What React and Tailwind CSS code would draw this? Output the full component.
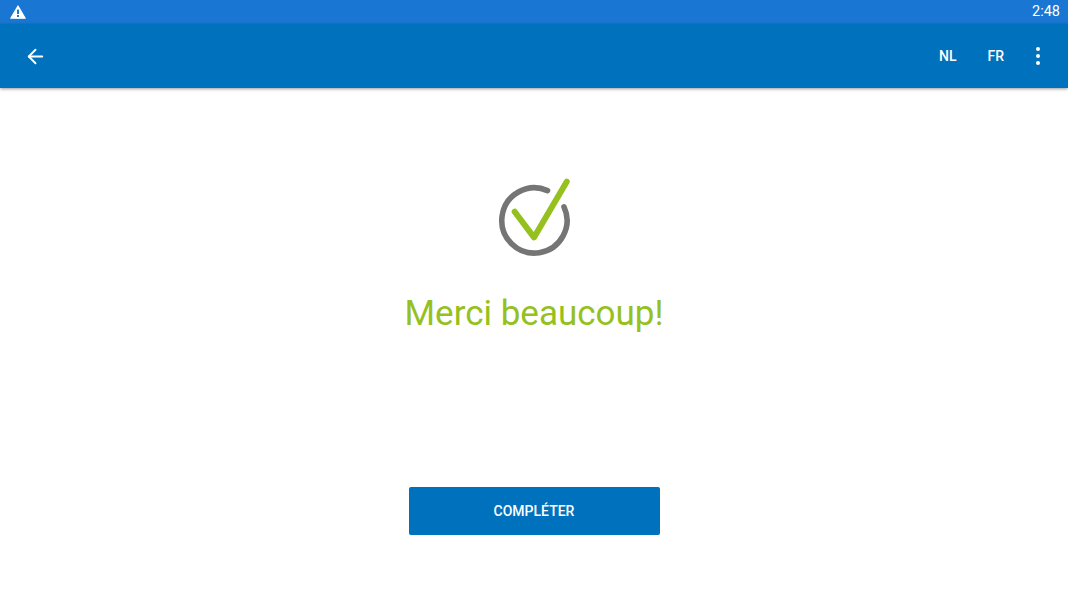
import { ArrowLeft } from 'lucide-react'

function WarningIcon() {
  return (
    <svg width="16" height="14" viewBox="0 0 16 14">
      <path d="M8 1 L15.2 13.2 H0.8 Z" fill="#fff" stroke="#fff" strokeWidth="1.2" strokeLinejoin="round" />
      <rect x="7" y="4.6" width="2" height="4.4" fill="#1976d2" />
      <rect x="7" y="10" width="2" height="2" fill="#1976d2" />
    </svg>
  )
}

function CheckCircle() {
  return (
    <svg width="76" height="80" viewBox="0 0 76 80" fill="none" strokeLinecap="round" strokeLinejoin="round">
      <path d="M51.5 12.6 A32.6 32.6 0 1 0 68 28.8" stroke="#757575" strokeWidth="5.6" />
      <path d="M18.7 33.7 L38 59.4 L70.7 3.7" stroke="#95c11f" strokeWidth="6" />
    </svg>
  )
}

export default function App() {
  return (
    <div className="h-[601px] flex flex-col bg-white font-['Roboto',sans-serif]">
      <div className="h-6 bg-[#1976d2] flex items-center justify-between pl-[10px] pr-2 text-white">
        <WarningIcon />
        <span className="text-[14.5px]">2:48</span>
      </div>
      <div className="h-16 bg-[#0071bc] flex items-center justify-between pl-6 pr-7 text-white shadow-[0_1px_3px_rgba(0,0,0,0.4)] z-10">
        <ArrowLeft size={23} strokeWidth={2} />
        <div className="flex items-center text-sm font-medium">
          <span className="mr-[31px]">NL</span>
          <span className="mr-[32px]">FR</span>
          <span className="flex flex-col gap-[3px]">
            <i className="w-1 h-1 rounded-full bg-white" />
            <i className="w-1 h-1 rounded-full bg-white" />
            <i className="w-1 h-1 rounded-full bg-white" />
          </span>
        </div>
      </div>
      <div className="flex flex-col items-center pt-[90px]">
        <CheckCircle />
        <h1 className="mt-[33px] text-[35px] leading-[46px] text-[#95c11f]">Merci beaucoup!</h1>
        <button className="mt-[150px] w-[251px] h-12 bg-[#0071bc] rounded-[2px] text-white text-sm font-medium">COMPLÉTER</button>
      </div>
    </div>
  )
}
